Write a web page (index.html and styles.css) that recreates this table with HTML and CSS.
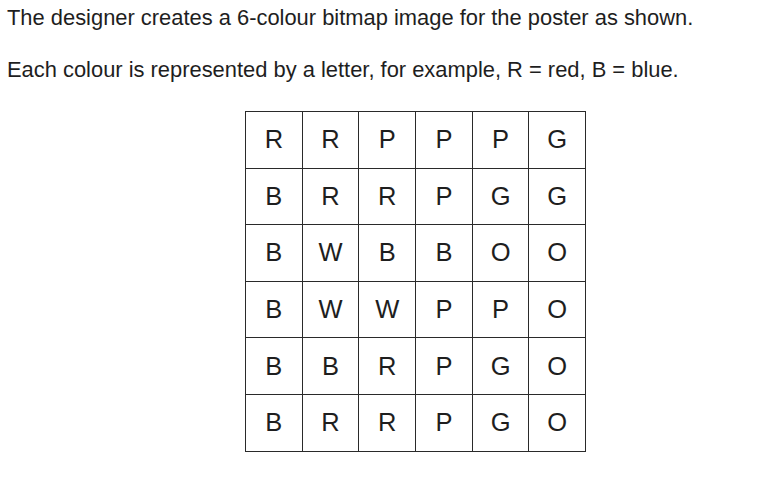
FILE: index.html
```html
<!DOCTYPE html>
<html>
<head>
<meta charset="utf-8">
<link rel="stylesheet" href="styles.css">
</head>
<body>
<p class="line">The designer creates a 6-colour bitmap image for the poster as shown.</p>
<p class="line">Each colour is represented by a letter, for example, R = red, B = blue.</p>
<div class="wrap">
<table class="grid">
<tr><td>R</td><td>R</td><td>P</td><td>P</td><td>P</td><td>G</td></tr>
<tr><td>B</td><td>R</td><td>R</td><td>P</td><td>G</td><td>G</td></tr>
<tr><td>B</td><td>W</td><td>B</td><td>B</td><td>O</td><td>O</td></tr>
<tr><td>B</td><td>W</td><td>W</td><td>P</td><td>P</td><td>O</td></tr>
<tr><td>B</td><td>B</td><td>R</td><td>P</td><td>G</td><td>O</td></tr>
<tr><td>B</td><td>R</td><td>R</td><td>P</td><td>G</td><td>O</td></tr>
</table>
</div>
</body>
</html>
```
FILE: styles.css
```css
html, body {
  margin: 0;
  padding: 0;
  background: #fff;
}
body {
  padding: 6px 8px 0 7px;
  font-family: "Liberation Sans", Arial, sans-serif;
  color: #1e1e1e;
}
.line {
  margin: 0 0 28.5px 0;
  font-size: 21.9px;
  line-height: 23px;
}
.wrap {
  padding-left: 238px;
  padding-top: 2px;
}
.grid {
  border-collapse: collapse;
}
.grid td {
  border: 1px solid #2a2a2a;
  width: 55.7px;
  height: 55.6px;
  padding: 0;
  text-align: center;
  vertical-align: middle;
  font-size: 25.5px;
}
```
